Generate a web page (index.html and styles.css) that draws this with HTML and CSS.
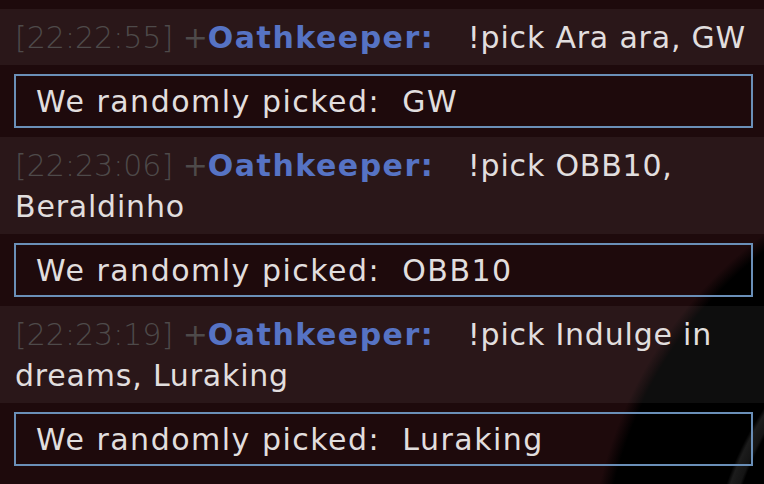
FILE: index.html
```html
<!DOCTYPE html>
<html lang="en">
<head>
    <meta charset="UTF-8">
    <meta name="viewport" content="width=device-width, initial-scale=1.0">
    <title>Chat - !pick</title>
    <link rel="stylesheet" href="styles.css">
</head>
<body>

    <div class="chat">

        <!-- 1 -->
        <div class="msg">
            <span class="time">[22:22:55]</span>
            <span class="badge">+</span><span class="user">Oathkeeper:</span>
            <span class="text">!pick Ara ara, GW</span>
        </div>
        <div class="bot">We randomly picked:&nbsp; GW</div>

        <!-- 2 -->
        <div class="msg">
            <span class="time">[22:23:06]</span>
            <span class="badge">+</span><span class="user">Oathkeeper:</span>
            <span class="text">!pick OBB10, Beraldinho</span>
        </div>
        <div class="bot">We randomly picked:&nbsp; OBB10</div>

        <!-- 3 -->
        <div class="msg">
            <span class="time">[22:23:19]</span>
            <span class="badge">+</span><span class="user">Oathkeeper:</span>
            <span class="text">!pick Indulge in dreams, Luraking</span>
        </div>
        <div class="bot">We randomly picked:&nbsp; Luraking</div>

    </div>

</body>
</html>
```

FILE: styles.css
```css
/*初始化*/
html,body{
    margin: 0;
    padding: 0;
    height: 100%;
}

body{
    background-color: #1e0a0c;
    /*右下角的黑色大圆*/
    background-image: radial-gradient(circle 440px at 1024px 584px,
        #000 0, #000 298px,
        #141414 301px, #1c1c1c 310px,
        #000 314px, #000 422px,
        #0d0405 428px,
        rgba(30,10,12,0) 436px);
    background-repeat: no-repeat;

    font-family: "DejaVu Sans", Verdana, sans-serif;
    font-size: 30px;
    line-height: 41px;
    color: #e1dede;
    overflow: hidden;
}

/*1.列表*/
.chat{
    display: flex;
    flex-direction: column;
    gap: 9px;
    padding-top: 9px;
}

/*2.用户消息*/
.msg{
    background-color: rgba(255,255,255,0.055);
    padding: 8px 12px 7px 15px;
}

.time{
    color: #4e4a4a;
    font-weight: 200;
}

.badge{
    color: #4e4a4a;
}

.user{
    color: #5673c4;
    font-weight: bold;
    letter-spacing: 1.5px;
    margin-right: 24px;
}

.text{
    letter-spacing: 0.8px;
}

/*3.机器人回复的框*/
.bot{
    margin: 0 11px 0 14px;
    border: 2px solid #6a8fb8;
    padding: 5px 20px 4px;
    letter-spacing: 1.5px;
}
```
